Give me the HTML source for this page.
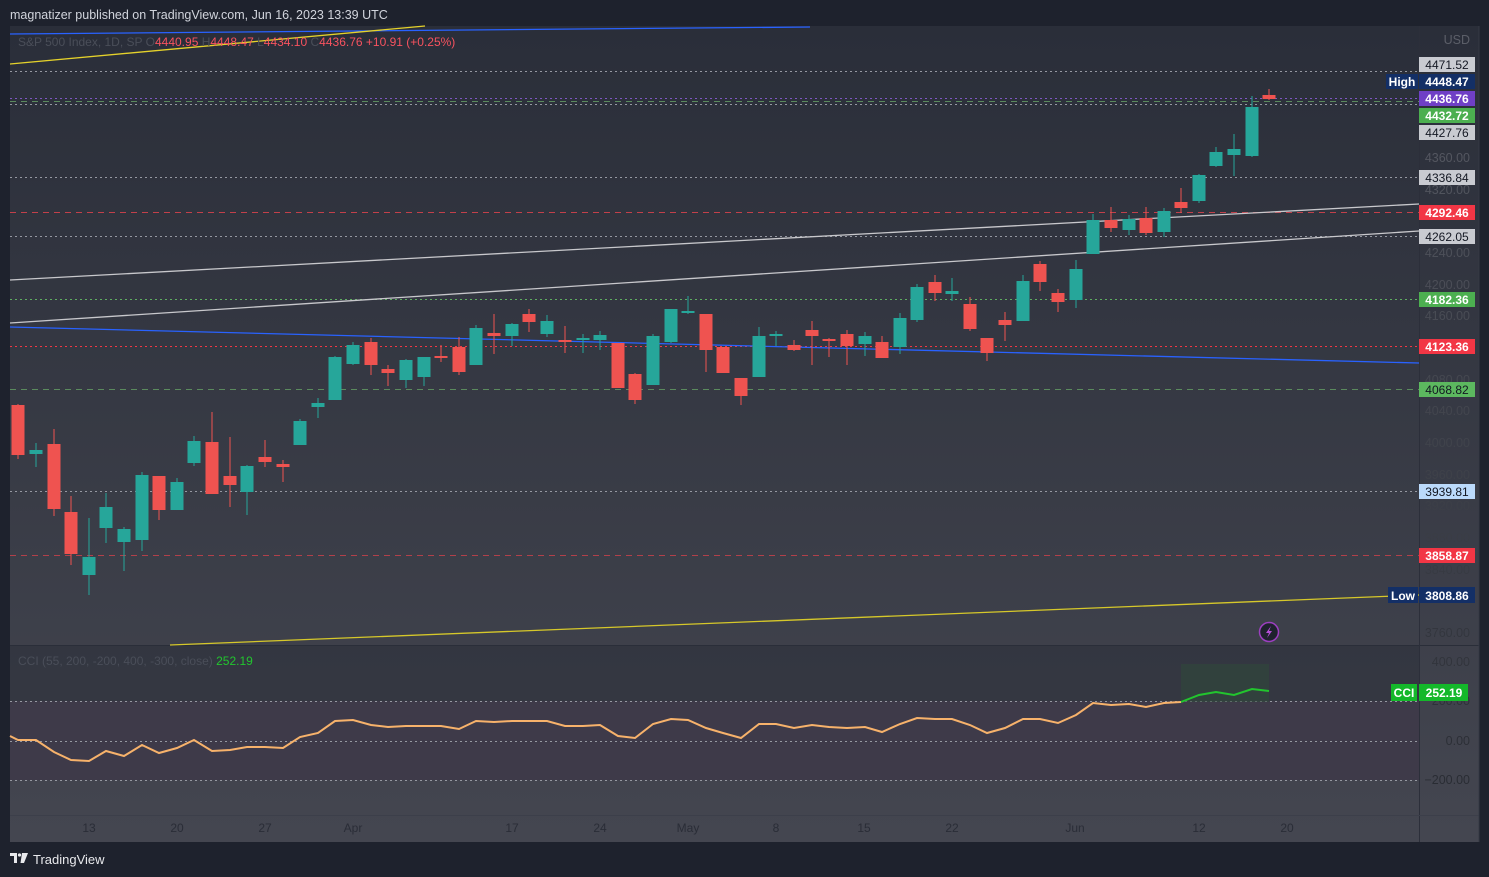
<!DOCTYPE html>
<html><head><meta charset="utf-8">
<style>
html,body{margin:0;padding:0;background:#1e222d;width:1489px;height:877px;overflow:hidden;font-family:"Liberation Sans",sans-serif}
svg{position:absolute;left:0;top:0}
</style></head>
<body>
<svg id="s" width="1489" height="877" xmlns="http://www.w3.org/2000/svg" font-family="Liberation Sans, sans-serif">
<defs>
<linearGradient id="bg2" x1="0" y1="26" x2="0" y2="842" gradientUnits="userSpaceOnUse">
<stop offset="0" stop-color="#2a2e39"/><stop offset="1" stop-color="#444650"/>
</linearGradient>
<linearGradient id="tx" x1="0" y1="26" x2="0" y2="842" gradientUnits="userSpaceOnUse">
<stop offset="0" stop-color="#5c5f69"/><stop offset="1" stop-color="#25282f"/>
</linearGradient>
</defs>
<rect x="0" y="0" width="1489" height="877" fill="#1e222d"/>
<text x="10" y="19" fill="#d1d4dc" font-size="12.5">magnatizer published on TradingView.com, Jun 16, 2023 13:39 UTC</text>
<rect x="10" y="26" width="1469" height="816" fill="url(#bg2)"/>
<rect x="10" y="646" width="1409" height="55" fill="#2d303b" opacity="0.6"/>
<rect x="10" y="701" width="1409" height="79" fill="#3d3848" opacity="0.8"/>
<line x1="10" y1="645.5" x2="1479" y2="645.5" stroke="#2a2e39" stroke-width="1"/>
<line x1="1419.5" y1="26" x2="1419.5" y2="842" stroke="#2c2f3a" stroke-width="1"/>
<line x1="10" y1="815.5" x2="1479" y2="815.5" stroke="#3c3f4a" stroke-width="1"/>
<rect x="1479" y="26" width="10" height="816" fill="#1e222d"/>
<line x1="1479" y1="26" x2="1479" y2="842" stroke="#363a45"/>

<g stroke-width="1">
<line x1="10" x2="1419" y1="71.5" y2="71.5" stroke="#9598a1" stroke-dasharray="2,3"/>
<line x1="10" x2="1419" y1="98.5" y2="98.5" stroke="#7e57c2" stroke-dasharray="2,3"/>
<line x1="10" x2="1419" y1="101.5" y2="101.5" stroke="#5b8a5e" stroke-dasharray="6,5"/>
<line x1="10" x2="1419" y1="104.5" y2="104.5" stroke="#9598a1" stroke-dasharray="2,3"/>
<line x1="10" x2="1419" y1="177.5" y2="177.5" stroke="#9598a1" stroke-dasharray="2,3"/>
<line x1="10" x2="1419" y1="212.5" y2="212.5" stroke="#c2404a" stroke-dasharray="6,5"/>
<line x1="10" x2="1419" y1="236.5" y2="236.5" stroke="#9598a1" stroke-dasharray="2,3"/>
<line x1="10" x2="1419" y1="299.5" y2="299.5" stroke="#5fae62" stroke-dasharray="2,3"/>
<line x1="10" x2="1419" y1="346.5" y2="346.5" stroke="#f23645" stroke-dasharray="2,3"/>
<line x1="10" x2="1419" y1="389.5" y2="389.5" stroke="#5b8a5e" stroke-dasharray="6,5"/>
<line x1="10" x2="1419" y1="491.5" y2="491.5" stroke="#9598a1" stroke-dasharray="2,3"/>
<line x1="10" x2="1419" y1="555.5" y2="555.5" stroke="#b2404a" stroke-dasharray="6,5"/>
<line x1="10" x2="1419" y1="701.5" y2="701.5" stroke="#9598a1" stroke-dasharray="2,3"/>
<line x1="10" x2="1419" y1="741.5" y2="741.5" stroke="#9598a1" stroke-dasharray="2,3"/>
<line x1="10" x2="1419" y1="780.5" y2="780.5" stroke="#9598a1" stroke-dasharray="2,3"/>
</g>
<line x1="10" y1="280" x2="1419" y2="204" stroke="#c8c8cc" stroke-width="1.3"/>
<line x1="10" y1="323" x2="1419" y2="231" stroke="#c8c8cc" stroke-width="1.3"/>
<line x1="10" y1="327" x2="1419" y2="363" stroke="#2962ff" stroke-width="1.3"/>
<line x1="10" y1="34" x2="810" y2="27" stroke="#2962ff" stroke-width="1.3"/>
<line x1="10" y1="64" x2="425" y2="26" stroke="#e5d22b" stroke-width="1.3"/>
<line x1="170" y1="645" x2="1419" y2="595" stroke="#d6c82a" stroke-width="1.3"/>
<g id="candles"></g>

<text x="18" y="46" font-size="12" fill="#4a4e59">S&amp;P 500 Index, 1D, SP  O<tspan fill="#f7525f">4440.95</tspan>  H<tspan fill="#f7525f">4448.47</tspan>  L<tspan fill="#f7525f">4434.10</tspan>  C<tspan fill="#f7525f">4436.76</tspan>  <tspan fill="#f7525f">+10.91 (+0.25%)</tspan></text>

<rect x="1181" y="664" width="88" height="38" fill="#2f4a3a" opacity="0.55"/>
<polyline fill="none" stroke="#f7b26b" stroke-width="2" points="10,736 18,740 36,740 54,752 71,760 89,761 106,751 124,756 142,745 159,753 177,748 194,740 212,751 230,750 247,747 265,747 283,748 300,737 318,733 335,721 353,720 371,725 388,727 406,726 424,726 441,726 459,729 476,721 494,722 512,721 529,721 547,721 565,726 583,726 600,725 618,736 635,738 653,724 671,719 688,720 706,728 723,733 741,738 759,724 776,724 794,728 812,725 829,727 847,728 865,727 882,732 900,724 917,718 935,719 952,719 970,725 987,733 1005,728 1023,719 1040,719 1058,723 1076,715 1093,703 1111,705 1129,704 1146,707 1164,703 1181,702"/>
<polyline fill="none" stroke="#22c52e" stroke-width="2" points="1181,702 1199,695 1216,692 1234,695 1252,689 1269,691"/>
<text x="18" y="665" font-size="12" fill="#4a4e59">CCI (55, 200, -200, 400, -300, close)  <tspan fill="#22c52e">252.19</tspan></text>

<circle cx="1269" cy="632" r="9.5" fill="#1e222d" stroke="#9c3fc0" stroke-width="1.5"/>
<path d="M1271,626 L1266,633 L1269,633 L1267,638 L1272,631 L1269,631 Z" fill="#b54fd8"/>

<g font-size="12.5" fill="url(#tx)" text-anchor="end">
<text x="1470" y="44">USD</text>
<text x="1470" y="162">4360.00</text>
<text x="1470" y="194">4320.00</text>
<text x="1470" y="257">4240.00</text>
<text x="1470" y="289">4200.00</text>
<text x="1470" y="320">4160.00</text>
<text x="1470" y="384">4080.00</text>
<text x="1470" y="415">4040.00</text>
<text x="1470" y="447">4000.00</text>
<text x="1470" y="479">3960.00</text>
<text x="1470" y="510">3920.00</text>
<text x="1470" y="542">3880.00</text>
<text x="1470" y="574">3840.00</text>
<text x="1470" y="637">3760.00</text>
<text x="1470" y="666">400.00</text>
<text x="1470" y="705">200.00</text>
<text x="1470" y="745">0.00</text>
<text x="1470" y="784">−200.00</text>
</g>
<g font-size="12" text-anchor="middle">
<rect x="1419" y="57" width="56" height="15" fill="#c9cbd1"/><text x="1447" y="69" fill="#131722">4471.52</text>
<rect x="1386" y="74" width="32" height="15" fill="#132f66"/><text x="1402" y="86" fill="#fff" font-weight="bold">High</text>
<rect x="1419" y="74" width="56" height="15" fill="#132f66"/><text x="1447" y="86" fill="#fff" font-weight="bold">4448.47</text>
<rect x="1419" y="91" width="56" height="15" fill="#6f3fc6"/><text x="1447" y="103" fill="#fff" font-weight="bold">4436.76</text>
<rect x="1419" y="108" width="56" height="15" fill="#4caf50"/><text x="1447" y="120" fill="#fff" font-weight="bold">4432.72</text>
<rect x="1419" y="125" width="56" height="15" fill="#c9cbd1"/><text x="1447" y="137" fill="#131722">4427.76</text>
<rect x="1419" y="170" width="56" height="15" fill="#c9cbd1"/><text x="1447" y="182" fill="#131722">4336.84</text>
<rect x="1419" y="205" width="56" height="15" fill="#f23645"/><text x="1447" y="217" fill="#fff" font-weight="bold">4292.46</text>
<rect x="1419" y="229" width="56" height="15" fill="#c9cbd1"/><text x="1447" y="241" fill="#131722">4262.05</text>
<rect x="1419" y="292" width="56" height="15" fill="#4caf50"/><text x="1447" y="304" fill="#fff" font-weight="bold">4182.36</text>
<rect x="1419" y="339" width="56" height="15" fill="#f23645"/><text x="1447" y="351" fill="#fff" font-weight="bold">4123.36</text>
<rect x="1419" y="382" width="56" height="15" fill="#5cb85f"/><text x="1447" y="394" fill="#131722">4068.82</text>
<rect x="1419" y="484" width="56" height="15" fill="#bbdafb"/><text x="1447" y="496" fill="#131722">3939.81</text>
<rect x="1419" y="548" width="56" height="15" fill="#f23645"/><text x="1447" y="560" fill="#fff" font-weight="bold">3858.87</text>
<rect x="1388" y="587" width="30" height="16" fill="#132f66"/><text x="1403" y="600" fill="#fff" font-weight="bold">Low</text>
<rect x="1419" y="587" width="56" height="16" fill="#132f66"/><text x="1447" y="600" fill="#fff" font-weight="bold">3808.86</text>
<rect x="1391" y="684" width="26" height="17" fill="#14b82a"/><text x="1404" y="697" fill="#fff" font-weight="bold">CCI</text>
<rect x="1419" y="684" width="49" height="17" fill="#14b82a"/><text x="1444" y="697" fill="#fff" font-weight="bold">252.19</text>
</g>
<g font-size="12" fill="#2a2d37" text-anchor="middle">
<text x="89" y="832">13</text><text x="177" y="832">20</text><text x="265" y="832">27</text><text x="353" y="832">Apr</text>
<text x="512" y="832">17</text><text x="600" y="832">24</text><text x="688" y="832">May</text><text x="776" y="832">8</text>
<text x="864" y="832">15</text><text x="952" y="832">22</text><text x="1075" y="832">Jun</text><text x="1199" y="832">12</text><text x="1287" y="832">20</text>
</g>
<g fill="#e8e9ec">
<path d="M10,853 h7 v10 h-3 v-7 h-4 z"/><circle cx="19.5" cy="855" r="1.6"/><path d="M22,853 h6 l-4,10 h-3.5 z"/>
</g>
<text x="33" y="864" font-size="13" fill="#e8e9ec">TradingView</text>
</svg>
<script>
var d=[
[18,405,455,404,459,'r'],[36,450,454,443,467,'g'],[54,444,509,429,516,'r'],[71,512,554,496,565,'r'],[89,557,575,518,595,'g'],
[106,507,528,493,543,'g'],[124,529,542,527,571,'g'],[142,475,540,472,551,'g'],[159,476,510,476,520,'r'],[177,482,510,478,510,'g'],
[194,441,463,436,466,'g'],[212,442,494,412,494,'r'],[230,476,485,437,507,'r'],[247,466,492,465,515,'g'],[265,457,462,440,467,'r'],
[283,464,467,460,482,'r'],[300,421,445,419,445,'g'],[318,403,407,398,418,'g'],[335,357,400,356,400,'g'],[353,345,364,342,365,'g'],
[371,342,365,338,375,'r'],[388,369,373,365,386,'r'],[406,360,380,359,388,'g'],[424,357,377,357,386,'g'],[441,356,358,345,362,'r'],
[459,347,372,337,375,'r'],[476,328,365,325,365,'g'],[494,333,336,314,354,'r'],[512,324,336,323,346,'g'],[529,314,322,309,332,'r'],
[547,321,334,315,337,'g'],[565,340,342,326,353,'r'],[583,338,340,334,353,'g'],[600,335,340,331,350,'g'],[618,343,388,343,388,'r'],
[635,374,400,373,404,'r'],[653,336,385,334,385,'g'],[671,309,342,309,343,'g'],[688,311,313,296,314,'g'],[706,314,350,314,372,'r'],
[723,347,373,347,373,'r'],[741,378,396,378,405,'r'],[759,336,377,327,377,'g'],[776,334,336,331,346,'g'],[794,345,350,340,351,'r'],
[812,330,336,321,365,'r'],[829,339,341,338,357,'r'],[847,334,346,330,365,'r'],[865,336,344,332,356,'g'],[882,342,358,336,358,'r'],
[900,318,347,313,354,'g'],[917,287,320,284,322,'g'],[935,282,293,275,301,'r'],[952,291,294,278,301,'g'],[970,304,329,297,331,'r'],
[987,338,353,338,361,'r'],[1005,320,325,312,341,'r'],[1023,281,321,275,321,'g'],[1040,264,282,261,291,'r'],[1058,293,302,289,312,'r'],
[1076,269,300,260,308,'g'],[1093,220,254,214,254,'g'],[1111,220,228,207,232,'r'],[1129,219,230,215,235,'g'],[1146,218,233,207,235,'r'],
[1164,211,232,208,237,'g'],[1181,202,208,188,213,'r'],[1199,175,201,174,203,'g'],[1216,152,166,147,167,'g'],[1234,149,155,134,176,'g'],
[1252,107,156,96,157,'g'],[1269,95,99,89,100,'r']];
var g=document.getElementById('candles'),h='';
d.forEach(function(c){var col=c[5]=='r'?'#ef5350':'#26a69a';
h+='<rect x="'+(c[0]-0.5)+'" y="'+c[3]+'" width="1" height="'+(c[4]-c[3])+'" fill="'+col+'"/>';
h+='<rect x="'+(c[0]-6.5)+'" y="'+c[1]+'" width="13" height="'+Math.max(2,c[2]-c[1])+'" fill="'+col+'"/>';});
g.innerHTML=h;
</script>
</body></html>
